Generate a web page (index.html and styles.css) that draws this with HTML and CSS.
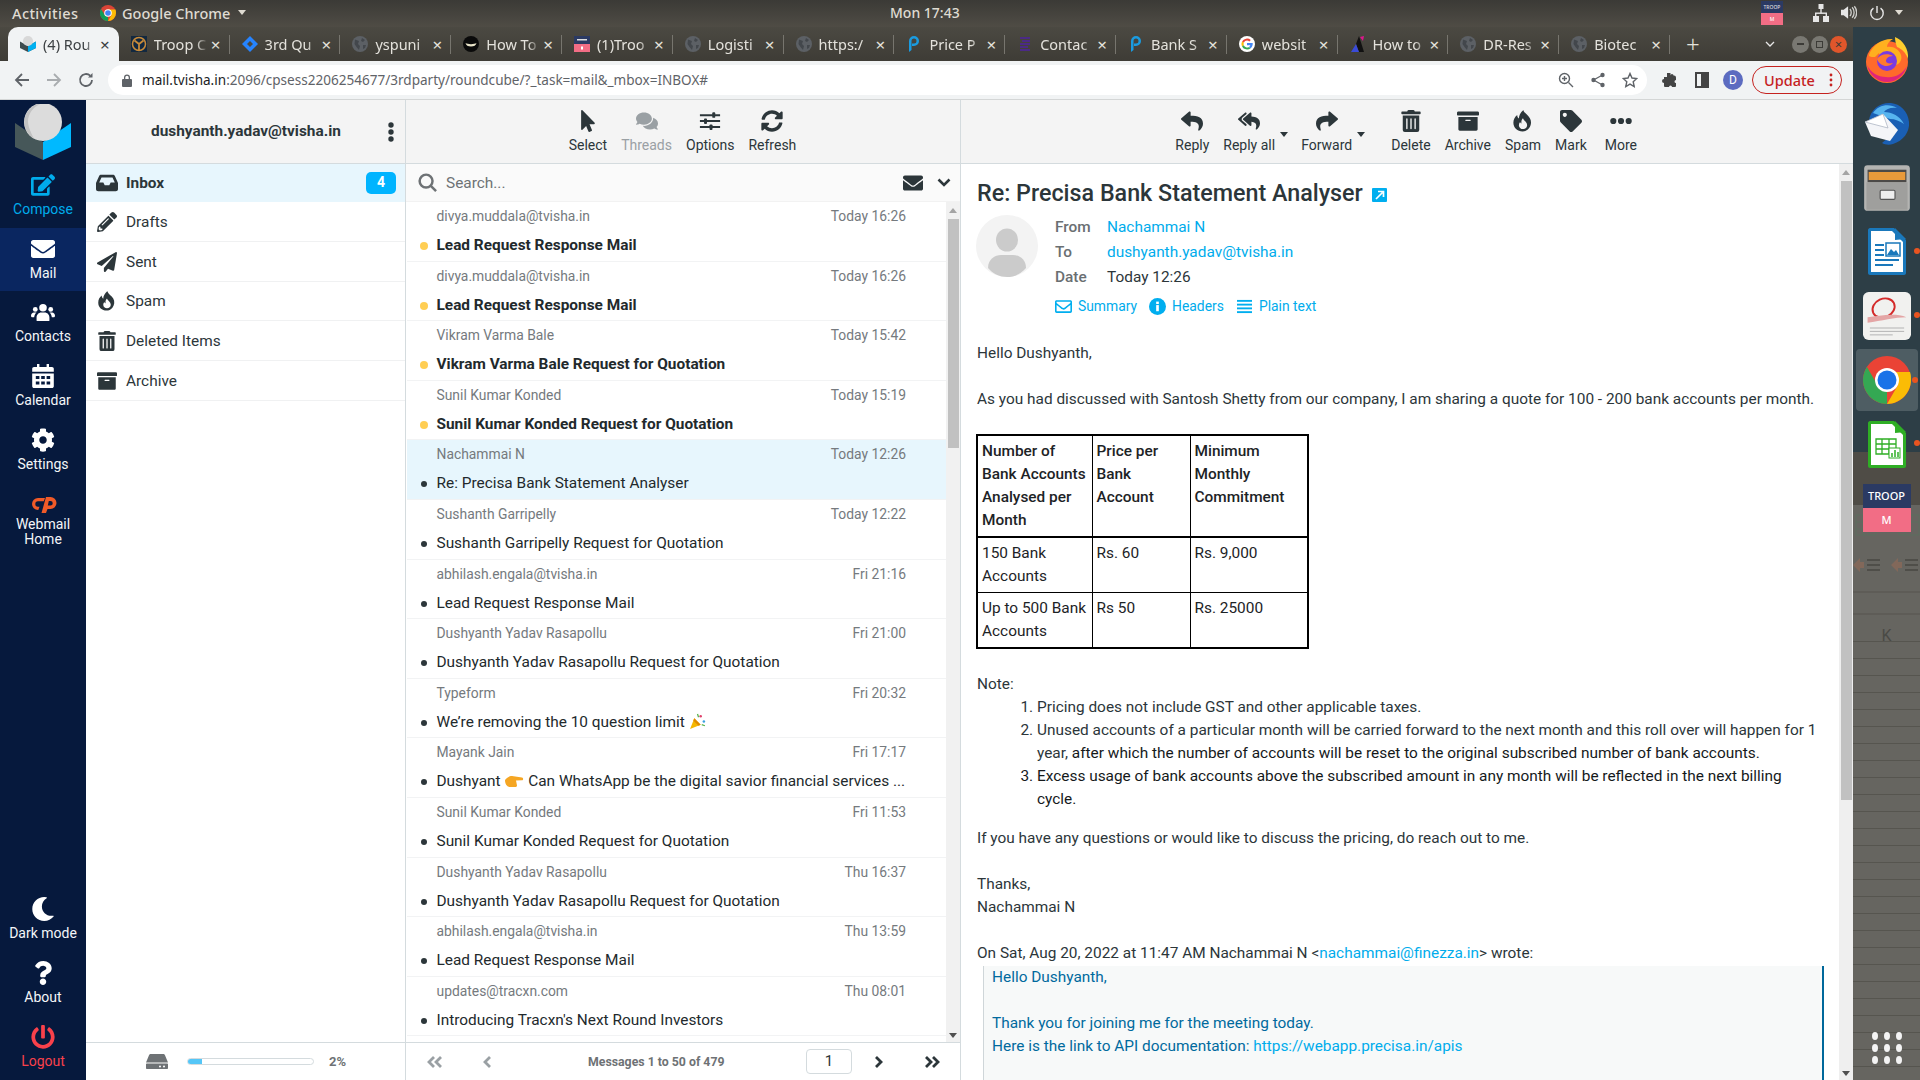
FILE: index.html
```html
<!DOCTYPE html>
<html lang="en">
<head>
<meta charset="utf-8">
<title>Roundcube Webmail</title>
<link rel="stylesheet" href="styles.css">
</head>
<body>
<svg class="defs" aria-hidden="true">
<symbol id="i-reply" viewBox="0 0 512 512"><path d="M8.309 189.836L184.313 37.851C199.719 24.546 224 35.347 224 56.015v80.053c160.629 1.839 288 34.032 288 186.258 0 61.441-39.581 122.309-83.333 154.132-13.653 9.931-33.111-2.533-28.077-18.631 45.344-145.012-21.507-183.51-176.59-185.742V360c0 20.7-24.3 31.453-39.687 18.164l-176.004-152c-11.071-9.562-11.086-26.753 0-36.328z"/></symbol>
<symbol id="i-forward" viewBox="0 0 512 512"><path d="M503.691 189.836L327.687 37.851C312.281 24.546 288 35.347 288 56.015v80.053C127.371 137.907 0 170.1 0 322.326c0 61.441 39.581 122.309 83.333 154.132 13.653 9.931 33.111-2.533 28.077-18.631C66.066 312.814 132.917 274.316 288 272.085V360c0 20.7 24.3 31.453 39.687 18.164l176.004-152c11.071-9.562 11.086-26.753 0-36.328z"/></symbol>
<symbol id="i-replyall" viewBox="0 0 576 512"><path d="M136.309 189.836L312.313 37.851C327.72 24.546 352 35.348 352 56.015v82.763c129.182 10.231 224 52.212 224 183.548 0 61.441-39.582 122.309-83.333 154.132-13.653 9.931-33.111-2.533-28.077-18.631 38.512-123.162-3.922-169.482-112.59-182.015v84.175c0 20.701-24.3 31.453-39.687 18.164L136.309 226.164c-11.071-9.561-11.086-26.753 0-36.328zm-128 36.328L184.313 378.15C199.7 391.439 224 380.687 224 359.986v-15.818l-108.606-93.785A55.96 55.96 0 0 1 96 207.998a55.953 55.953 0 0 1 19.393-42.38L224 71.832V56.015c0-20.667-24.28-31.469-39.687-18.164L8.309 189.836c-11.086 9.575-11.071 26.767 0 36.328z"/></symbol>
<symbol id="i-trash" viewBox="0 0 448 512"><path d="M32 464a48 48 0 0 0 48 48h288a48 48 0 0 0 48-48V128H32zm272-256a16 16 0 0 1 32 0v224a16 16 0 0 1-32 0zm-96 0a16 16 0 0 1 32 0v224a16 16 0 0 1-32 0zm-96 0a16 16 0 0 1 32 0v224a16 16 0 0 1-32 0zM432 32H312l-9.4-18.7A24 24 0 0 0 281.1 0H166.8a23.72 23.72 0 0 0-21.4 13.3L136 32H16A16 16 0 0 0 0 48v32a16 16 0 0 0 16 16h416a16 16 0 0 0 16-16V48a16 16 0 0 0-16-16z"/></symbol>
<symbol id="i-archive" viewBox="0 0 512 512"><path d="M32 448c0 17.7 14.3 32 32 32h384c17.7 0 32-14.3 32-32V160H32v288zm160-212c0-6.6 5.4-12 12-12h104c6.6 0 12 5.4 12 12v8c0 6.6-5.4 12-12 12H204c-6.6 0-12-5.4-12-12v-8zM480 32H32C14.3 32 0 46.3 0 64v48c0 8.8 7.2 16 16 16h480c8.8 0 16-7.2 16-16V64c0-17.7-14.3-32-32-32z"/></symbol>
<symbol id="i-tag" viewBox="0 0 512 512"><path d="M0 252.118V48C0 21.49 21.49 0 48 0h204.118a48 48 0 0 1 33.941 14.059l211.882 211.882c18.745 18.745 18.745 49.137 0 67.882L293.823 497.941c-18.745 18.745-49.137 18.745-67.882 0L14.059 286.059A48 48 0 0 1 0 252.118zM112 64c-26.51 0-48 21.49-48 48s21.49 48 48 48 48-21.49 48-48-21.49-48-48-48z"/></symbol>
<symbol id="i-env" viewBox="0 0 512 512"><path d="M502.3 190.8c3.9-3.1 9.7-.2 9.7 4.7V400c0 26.5-21.5 48-48 48H48c-26.5 0-48-21.5-48-48V195.6c0-5 5.7-7.8 9.7-4.7 22.4 17.4 52.1 39.5 154.1 113.6 21.1 15.4 56.7 47.8 92.2 47.6 35.7.3 72-32.8 92.3-47.6 102-74.1 131.6-96.3 154-113.7zM256 320c23.2.4 56.6-29.2 73.4-41.4 132.7-96.3 142.8-104.7 173.4-128.7 5.8-4.5 9.2-11.5 9.2-18.9v-19c0-26.5-21.5-48-48-48H48C21.5 64 0 85.5 0 112v19c0 7.4 3.4 14.3 9.2 18.9 30.6 23.9 40.7 32.4 173.4 128.7 16.8 12.2 50.2 41.8 73.4 41.4z"/></symbol>
<symbol id="i-envo" viewBox="0 0 512 512"><path d="M464 64H48C21.49 64 0 85.49 0 112v288c0 26.51 21.49 48 48 48h416c26.51 0 48-21.49 48-48V112c0-26.51-21.49-48-48-48zm0 48v40.805c-22.422 18.259-58.168 46.651-134.587 106.49-16.841 13.247-50.201 45.072-73.413 44.701-23.208.375-56.579-31.459-73.413-44.701C106.18 199.465 70.425 171.067 48 152.805V112h416zM48 400V214.398c22.914 18.251 55.409 43.862 104.938 82.646 21.857 17.205 60.134 55.186 103.062 54.955 42.717.231 80.509-37.199 103.053-54.947 49.528-38.783 82.032-64.401 104.947-82.653V400H48z"/></symbol>
<symbol id="i-cursor" viewBox="0 0 320 512"><path d="M302.189 329.126H196.105l55.831 135.993c3.889 9.428-.555 19.999-9.444 23.999l-49.165 21.427c-9.165 4-19.443-.571-23.332-9.714l-53.053-129.136-86.664 89.138C18.729 472.71 0 463.554 0 447.977V18.299C0 1.899 19.921-6.096 30.277 5.443l284.412 292.542c11.472 11.179 3.007 31.141-12.5 31.141z"/></symbol>
<symbol id="i-comments" viewBox="0 0 576 512"><path d="M416 192c0-88.4-93.1-160-208-160S0 103.6 0 192c0 34.3 14.1 65.9 38 92-13.4 30.2-35.5 54.2-35.8 54.5-2.2 2.3-2.8 5.7-1.5 8.7S4.8 352 8 352c36.6 0 66.9-12.3 88.7-25 32.2 15.7 70.3 25 111.3 25 114.9 0 208-71.6 208-160zm122 220c23.9-26 38-57.7 38-92 0-66.9-53.5-124.2-129.3-148.1.9 6.6 1.3 13.3 1.3 20.1 0 105.9-107.7 192-240 192-10.8 0-21.3-.8-31.7-1.9C207.8 439.6 281.8 480 368 480c41 0 79.1-9.2 111.3-25 21.8 12.7 52.1 25 88.7 25 3.2 0 6.1-1.9 7.3-4.8 1.3-2.9.7-6.3-1.5-8.7-.3-.3-22.4-24.2-35.8-54.5z"/></symbol>
<symbol id="i-sliders" viewBox="0 0 24 24"><path d="M1 4.500h22v2.200H1zM1 11h22v2.200H1zM1 17.500h22v2.200H1z"/><rect x="14.500" y="2.500" width="3.200" height="6" rx="1"/><rect x="5.500" y="9.200" width="3.200" height="6" rx="1"/><rect x="11.500" y="15.700" width="3.200" height="6" rx="1"/></symbol>
<symbol id="i-sync" viewBox="0 0 512 512"><path d="M370.72 133.28C339.458 104.008 298.888 87.962 255.848 88c-77.458.068-144.328 53.178-162.791 126.85-1.344 5.363-6.122 9.15-11.651 9.15H24.103c-7.498 0-13.194-6.807-11.807-14.176C33.933 94.924 134.813 8 256 8c66.448 0 126.791 26.136 171.315 68.685L463.03 40.97C478.149 25.851 504 36.559 504 57.941V192c0 13.255-10.745 24-24 24H345.941c-21.382 0-32.09-25.851-16.971-40.971l41.75-41.749zM32 296h134.059c21.382 0 32.09 25.851 16.971 40.971l-41.75 41.75c31.262 29.273 71.835 45.319 114.876 45.28 77.418-.07 144.315-53.144 162.787-126.849 1.344-5.363 6.122-9.15 11.651-9.15h57.304c7.498 0 13.194 6.807 11.807 14.176C478.067 417.076 377.187 504 256 504c-66.448 0-126.791-26.136-171.315-68.685L48.97 471.03C33.851 486.149 8 475.441 8 454.059V320c0-13.255 10.745-24 24-24z"/></symbol>
<symbol id="i-plane" viewBox="0 0 512 512"><path d="M476 3.2L12.5 270.6c-18.1 10.4-15.8 35.6 2.2 43.2L121 358.4l287.3-253.2c5.5-4.9 13.3 2.6 8.6 8.3L176 407v80.5c0 23.6 28.5 32.9 42.5 15.8L282 426l124.6 52.2c14.2 6 30.4-2.9 33-18.2l72-432C515 7.8 493.3-6.8 476 3.2z"/></symbol>
<symbol id="i-pencil" viewBox="0 0 512 512"><path d="M497.9 142.1l-46.1 46.1c-4.7 4.7-12.3 4.7-17 0l-111-111c-4.7-4.7-4.7-12.3 0-17l46.1-46.1c18.7-18.7 49.1-18.7 67.9 0l60.1 60.1c18.8 18.7 18.8 49.1 0 67.9zM284.2 99.8L21.6 362.4.4 483.9c-2.9 16.4 11.4 30.6 27.8 27.8l121.5-21.3 262.6-262.6c4.7-4.7 4.7-12.3 0-17l-111-111c-4.8-4.7-12.4-4.7-17.1 0zM124.1 339.9c-5.5-5.5-5.5-14.3 0-19.8l154-154c5.5-5.5 14.3-5.5 19.8 0s5.5 14.3 0 19.8l-154 154c-5.5 5.5-14.3 5.5-19.8 0zM88 424h48v36.3l-64.5 11.3-31.1-31.1L51.7 376H88v48z"/></symbol>
<symbol id="i-edit" viewBox="0 0 576 512"><path d="M402.6 83.2l90.2 90.2c3.8 3.8 3.8 10 0 13.8L274.4 405.6l-92.8 10.3c-12.4 1.4-22.9-9.1-21.5-21.5l10.3-92.8L388.8 83.2c3.8-3.8 10-3.8 13.8 0zm162-22.9l-48.8-48.8c-15.2-15.2-39.9-15.2-55.2 0l-35.4 35.4c-3.8 3.8-3.8 10 0 13.8l90.2 90.2c3.8 3.8 10 3.8 13.8 0l35.4-35.4c15.2-15.3 15.2-40 0-55.2zM384 346.2V448H64V128h229.8c3.2 0 6.2-1.3 8.5-3.5l40-40c7.6-7.6 2.2-20.5-8.5-20.5H48C21.5 64 0 85.5 0 112v352c0 26.5 21.5 48 48 48h352c26.5 0 48-21.5 48-48V306.2c0-10.7-12.9-16-20.5-8.5l-40 40c-2.2 2.3-3.5 5.3-3.5 8.5z"/></symbol>
<symbol id="i-cog" viewBox="0 0 512 512"><path d="M487.4 315.7l-42.6-24.6c4.3-23.2 4.3-47 0-70.2l42.6-24.6c4.9-2.8 7.1-8.6 5.5-14-11.1-35.6-30-67.8-54.7-94.6-3.8-4.1-10-5.1-14.8-2.3L380.8 110c-17.9-15.4-38.5-27.3-60.8-35.1V25.8c0-5.6-3.9-10.5-9.4-11.7-36.7-8.2-74.3-7.8-109.2 0-5.5 1.2-9.4 6.1-9.4 11.7V75c-22.2 7.9-42.8 19.8-60.8 35.1L88.7 85.5c-4.9-2.8-11-1.9-14.8 2.3-24.7 26.7-43.6 58.9-54.7 94.6-1.7 5.4.6 11.2 5.5 14L67.3 221c-4.3 23.2-4.3 47 0 70.2l-42.6 24.6c-4.9 2.8-7.1 8.6-5.5 14 11.1 35.6 30 67.8 54.7 94.6 3.8 4.1 10 5.1 14.8 2.3l42.6-24.6c17.9 15.4 38.5 27.3 60.8 35.1v49.2c0 5.6 3.9 10.5 9.4 11.7 36.7 8.2 74.3 7.8 109.2 0 5.5-1.2 9.4-6.1 9.4-11.7v-49.2c22.2-7.9 42.8-19.8 60.8-35.1l42.6 24.6c4.9 2.8 11 1.9 14.8-2.3 24.7-26.7 43.6-58.9 54.7-94.6 1.5-5.5-.7-11.3-5.6-14.1zM256 336c-44.1 0-80-35.9-80-80s35.9-80 80-80 80 35.9 80 80-35.9 80-80 80z"/></symbol>
<symbol id="i-moon" viewBox="0 0 512 512"><path d="M283.211 512c78.962 0 151.079-35.925 198.857-94.792 7.068-8.708-.639-21.43-11.562-19.35-124.203 23.654-238.262-71.576-238.262-196.954 0-72.222 38.662-138.635 101.498-174.394 9.686-5.512 7.25-20.197-3.756-22.23A258.156 258.156 0 0 0 283.211 0c-141.309 0-256 114.511-256 256 0 141.309 114.511 256 256 256z"/></symbol>
<symbol id="i-question" viewBox="0 0 384 512"><path d="M202.021 0C122.202 0 70.503 32.703 29.914 91.026c-7.363 10.58-5.093 25.086 5.178 32.874l43.138 32.709c10.373 7.865 25.132 6.026 33.253-4.148 25.049-31.381 43.63-49.449 82.757-49.449 30.764 0 68.816 19.799 68.816 49.631 0 22.552-18.617 34.134-48.993 51.164-35.423 19.86-82.299 44.576-82.299 106.405V320c0 13.255 10.745 24 24 24h72.471c13.255 0 24-10.745 24-24v-5.773c0-42.86 125.268-44.645 125.268-160.627C377.504 66.256 286.902 0 202.021 0zM192 373.459c-38.196 0-69.271 31.075-69.271 69.271 0 38.195 31.075 69.27 69.271 69.27s69.271-31.075 69.271-69.271-31.075-69.27-69.271-69.27z"/></symbol>
<symbol id="i-power" viewBox="0 0 512 512"><path d="M400 54.1c63 45 104 118.6 104 201.9 0 136.8-110.8 247.7-247.5 248C120 504.3 8.2 393 8 256.4 7.9 173.1 48.9 99.3 111.8 54.2c11.7-8.3 28-4.8 35 7.7L162.6 90c5.9 10.5 3.1 23.8-6.6 31-41.5 30.8-68 79.6-68 134.9-.1 92.3 74.5 168.1 168 168.1 91.6 0 168.6-74.2 168-169.1-.3-51.8-24.7-101.8-68.1-134-9.7-7.2-12.4-20.5-6.5-30.9l15.8-28.1c7-12.4 23.2-16.1 34.8-7.8zM296 264V24c0-13.3-10.7-24-24-24h-32c-13.3 0-24 10.7-24 24v240c0 13.3 10.7 24 24 24h32c13.3 0 24-10.7 24-24z"/></symbol>
<symbol id="i-fire" viewBox="0 0 24 24"><path fill-rule="evenodd" d="M12.500 0.500c1 3 5 5 7 8.500 2 3.500 1.500 8-1 11-2 2.500-4.500 3.500-7 3.500-5.500 0-10-4-10-9.500 0-3.500 1.500-6.500 4.200-8.500 0 1.500.5 3 1.800 3.800 0-3 1.500-6.300 5-9.300zM12 9c.5 2.300 4.500 4 4.500 7.500 0 2.500-2 4.300-4.500 4.300s-4.500-1.800-4.500-4.300c0-1.300.5-2.500 1.300-3.400.3.900.8 1.400 1.500 1.700C10 12 10.500 10.500 12 9z"/></symbol>
<symbol id="i-inbox" viewBox="0 0 24 18"><path d="M5.500 0h13c.9 0 1.700.5 2.100 1.300L24 9v6.500c0 1.400-1.100 2.500-2.500 2.500h-19C1.100 18 0 16.900 0 15.500V9l3.400-7.700C3.800.5 4.600 0 5.500 0zM6 3 3.500 8.500H8l1.500 3h5l1.500-3h4.500L18 3z"/></symbol>
<symbol id="i-users" viewBox="0 0 28 20"><circle cx="14" cy="5" r="4.400"/><circle cx="5" cy="7" r="2.800"/><circle cx="23" cy="7" r="2.800"/><path d="M6.500 20v-3.500C6.500 13 9 10.500 12 10.500h4c3 0 5.500 2.500 5.500 6V20c0 .5-.5 .5-1 .5h-13c-.5 0-1 0-1-.5zM0 14.500C0 12 1.500 10.500 3.500 10.500h3c-1.500 1.200-2.500 3-2.800 5.500H1c-.5 0-1-.5-1-1.500zM28 14.500c0-2.500-1.500-4-3.500-4h-3c1.500 1.200 2.500 3 2.800 5.500H27c.5 0 1-.5 1-1.500z"/></symbol>
<symbol id="i-cal" viewBox="0 0 18 20"><path fill-rule="evenodd" d="M4 0h2v2.500h6V0h2v2.500h2.500c.8 0 1.500.7 1.500 1.500v2.500H0V4c0-.8.7-1.500 1.500-1.500H4zM0 8h18v10.500c0 .8-.7 1.500-1.500 1.500h-15C.7 20 0 19.300 0 18.500zM3 10v2.500h3V10zm4.500 0v2.500h3V10zm4.500 0v2.500h3V10zM3 14.500V17h3v-2.500zm4.500 0V17h3v-2.500zm4.500 0V17h3v-2.500z"/></symbol>
<symbol id="i-globe" viewBox="0 0 16 16"><circle cx="8" cy="8" r="8" fill="#5c6065"/><path d="M3 3.500 7 5 6 8 8 10 7 14 4.500 11 2.500 8zM10 2l3 2-2 2-2-1zM11 9l3 0-1 3-2 1z" fill="#43474c"/></symbol>
</svg>

<header class="topbar">
  <span class="tb-activities">Activities</span>
  <svg class="tb-chrome" viewBox="0 0 16 16"><circle cx="8" cy="8" r="8" fill="#db4437"/><path d="M8 16A8 8 0 0 1 1 4l4 6.500 3 1.500z" fill="#0f9d58"/><path d="M16 8a8 8 0 0 1-8 8l3.500-6L8 4.500h7.500c.3 1 .5 2.300.5 3.500z" fill="#fbbc05"/><circle cx="8" cy="8" r="3.800" fill="#fff"/><circle cx="8" cy="8" r="2.800" fill="#4285f4"/></svg>
  <span class="tb-app">Google Chrome</span>
  <span class="tb-caret"></span>
  <span class="tb-clock">Mon 17:43</span>
  <div class="tb-troop"><span class="tb-troop-a">TROOP</span><span class="tb-troop-b">M</span></div>
  <svg class="tb-net" viewBox="0 0 16 18" fill="#e6e6e6"><rect x="5.500" y="0" width="5" height="5"/><rect x="7.300" y="5" width="1.400" height="4"/><rect x="2" y="8.500" width="12" height="1.400"/><rect x="2" y="9" width="1.400" height="3"/><rect x="12.600" y="9" width="1.400" height="3"/><rect x="0" y="12" width="6" height="6"/><rect x="10" y="12" width="6" height="6"/></svg>
  <svg class="tb-vol" viewBox="0 0 18 16" fill="none" stroke="#cfcfcc"><path d="M0 5h3l5-4v14l-5-4H0z" fill="#e6e6e6" stroke="none"/><path d="M10 4c2 2 2 6 0 8M12.500 2c3 3 3 9 0 12M15 1c3.500 4 3.500 10 0 14" stroke-width="1.500"/></svg>
  <svg class="tb-pow" viewBox="0 0 18 18" fill="none" stroke="#e6e6e6" stroke-width="1.600"><path d="M9 1v8M5 3.500a7 7 0 1 0 8 0"/></svg>
  <span class="tb-caret tb-caret-r"></span>
</header>

<div class="desk">
<div class="win">
  <div class="tabstrip">
    <div class="tab tab-on">
      <svg class="fav" viewBox="0 0 16 16"><path d="M0 5.500 8 10l8-4.500V12l-8 4-8-4z" fill="#3d4b4e"/><path d="M8 10l8-4.500V12l-8 4z" fill="#00b0f0"/><circle cx="8" cy="5" r="5" fill="#d8d8d8"/></svg>
      <span class="tab-t">(4) Rou</span><span class="tab-x">×</span>
    </div>
    <div class="tab">
      <svg class="fav" viewBox="0 0 16 16"><rect width="16" height="18" y="-1" fill="#12283f"/><circle cx="8" cy="8" r="6.500" fill="none" stroke="#c78a3a" stroke-width="1.500"/><path d="M3.500 4.500 8 8l4.500-3.500M8 8v6" fill="none" stroke="#c78a3a" stroke-width="1.800"/></svg>
      <span class="tab-t">Troop C</span><span class="tab-x">×</span>
    </div>
    <div class="tab">
      <svg class="fav" viewBox="0 0 16 16"><path d="M8 0 16 8 8 16 0 8z" fill="#2684ff"/><path d="M8 5 11 8 8 11 5 8z" fill="#4a4841"/></svg>
      <span class="tab-t">3rd Qu</span><span class="tab-x">×</span>
    </div>
    <div class="tab"><svg class="fav"><use href="#i-globe"/></svg><span class="tab-t">yspuni</span><span class="tab-x">×</span></div>
    <div class="tab">
      <svg class="fav" viewBox="0 0 16 16"><circle cx="8" cy="8" r="8" fill="#0a0a0a"/><path d="M2.500 7c2 1.500 9 1.500 11 0-.5 2.500-2.500 3.500-5.500 3.500S3 9.500 2.500 7z" fill="#e9e4c9"/></svg>
      <span class="tab-t">How To</span><span class="tab-x">×</span>
    </div>
    <div class="tab">
      <svg class="fav" viewBox="0 0 16 16"><rect y="0" width="16" height="8" fill="#2b3a63"/><rect y="8" width="16" height="8" fill="#f26d85"/><rect x="3" y="3" width="10" height="1.500" fill="#ddd"/><rect x="7" y="10.500" width="2" height="3" fill="#fff"/></svg>
      <span class="tab-t">(1)Troo</span><span class="tab-x">×</span>
    </div>
    <div class="tab"><svg class="fav"><use href="#i-globe"/></svg><span class="tab-t">Logisti</span><span class="tab-x">×</span></div>
    <div class="tab"><svg class="fav"><use href="#i-globe"/></svg><span class="tab-t">https:/</span><span class="tab-x">×</span></div>
    <div class="tab">
      <svg class="fav" viewBox="0 0 16 16"><path d="M3 16V5a5 5 0 1 1 5 5H6V7.500h2a2.500 2.500 0 1 0-2.500-2.500V14z" fill="#1a9be0"/></svg>
      <span class="tab-t">Price P</span><span class="tab-x">×</span>
    </div>
    <div class="tab">
      <svg class="fav" viewBox="0 0 16 16" fill="#4b2a86"><rect x="3" y="1" width="10" height="2"/><rect x="5" y="4" width="8" height="2"/><rect x="3" y="7" width="10" height="2"/><rect x="3" y="10" width="8" height="2"/><rect x="3" y="13" width="10" height="2"/></svg>
      <span class="tab-t">Contac</span><span class="tab-x">×</span>
    </div>
    <div class="tab">
      <svg class="fav" viewBox="0 0 16 16"><path d="M3 16V5a5 5 0 1 1 5 5H6V7.500h2a2.500 2.500 0 1 0-2.500-2.500V14z" fill="#1a9be0"/></svg>
      <span class="tab-t">Bank S</span><span class="tab-x">×</span>
    </div>
    <div class="tab">
      <svg class="fav" viewBox="0 0 16 16"><circle cx="8" cy="8" r="8" fill="#fff"/><path d="M8 4.500a3.500 3.500 0 0 1 2.300.9l1.500-1.500A5.800 5.800 0 0 0 3 5.500l1.800 1.300A3.500 3.500 0 0 1 8 4.500z" fill="#ea4335"/><path d="M3 5.500a5.800 5.800 0 0 0 0 5l1.800-1.300a3.400 3.400 0 0 1 0-2.400z" fill="#fbbc05"/><path d="M3 10.500a5.800 5.800 0 0 0 8.700 1.700l-1.700-1.300a3.500 3.500 0 0 1-5.200-1.700z" fill="#34a853"/><path d="M13.700 7H8v2.200h3.300a2.900 2.900 0 0 1-1.300 1.700l1.700 1.300c1.300-1.200 2.300-3 2-5.200z" fill="#4285f4"/></svg>
      <span class="tab-t">websit</span><span class="tab-x">×</span>
    </div>
    <div class="tab">
      <svg class="fav" viewBox="0 0 16 16"><path d="M9 0 14 16H9L6 8z" fill="#111"/><path d="M6 8 9 16H1z" fill="#3a4bd8"/><path d="M10 1 14 0 13 5z" fill="#e0158e"/></svg>
      <span class="tab-t">How to</span><span class="tab-x">×</span>
    </div>
    <div class="tab"><svg class="fav"><use href="#i-globe"/></svg><span class="tab-t">DR-Res</span><span class="tab-x">×</span></div>
    <div class="tab"><svg class="fav"><use href="#i-globe"/></svg><span class="tab-t">Biotec</span><span class="tab-x">×</span></div>
    <span class="tab-plus">+</span>
    <svg class="tab-chev" viewBox="0 0 10 6" fill="none" stroke="#e8e8e8" stroke-width="1.300"><path d="M1 1l4 4 4-4"/></svg>
    <div class="winbtns">
      <span class="wb"><span class="wb-min"></span></span>
      <span class="wb"><span class="wb-max"></span></span>
      <span class="wb wb-close">×</span>
    </div>
  </div>

  <div class="omni">
    <svg class="om-ic om-back" viewBox="0 0 16 16" fill="none" stroke="#5f6368" stroke-width="1.800"><path d="M15 8H2M8 2 2 8l6 6"/></svg>
    <svg class="om-ic om-fwd" viewBox="0 0 16 16" fill="none" stroke="#a9acaf" stroke-width="1.800"><path d="M1 8h13M8 2l6 6-6 6"/></svg>
    <svg class="om-ic om-rel" viewBox="0 0 16 16" fill="none" stroke="#5f6368" stroke-width="1.800"><path d="M14 8a6 6 0 1 1-1.800-4.300"/><path d="M14.500 1v4.500H10" fill="#5f6368" stroke="none"/></svg>
    <div class="om-bar">
      <svg class="om-lock" viewBox="0 0 10 13" fill="#5f6368"><path d="M2 5V3.500a3 3 0 0 1 6 0V5h1a1 1 0 0 1 1 1v6a1 1 0 0 1-1 1H1a1 1 0 0 1-1-1V6a1 1 0 0 1 1-1zm1.300 0h3.400V3.500a1.700 1.700 0 0 0-3.400 0z"/></svg>
      <span class="om-url"><span class="om-host">mail.tvisha.in</span>:2096/cpsess2206254677/3rdparty/roundcube/?_task=mail&amp;_mbox=INBOX#</span>
      <svg class="om-r" viewBox="0 0 16 16" fill="none" stroke="#5f6368" stroke-width="1.400"><circle cx="6.500" cy="6.500" r="5"/><path d="M10.500 10.500l4.500 4.500M6.500 4v5M4 6.500h5"/></svg>
      <svg class="om-r" viewBox="0 0 16 16" fill="#5f6368"><circle cx="12.500" cy="3" r="2.200"/><circle cx="3.500" cy="8" r="2.200"/><circle cx="12.500" cy="13" r="2.200"/><path d="M3.500 8l9-5M3.500 8l9 5" stroke="#5f6368" stroke-width="1.300"/></svg>
      <svg class="om-r" viewBox="0 0 16 16" fill="none" stroke="#5f6368" stroke-width="1.400"><path d="M8 1.500l2 4.500 4.800.5-3.600 3.200 1 4.800L8 12.100l-4.200 2.400 1-4.800L1.200 6.500 6 6z"/></svg>
    </div>
    <svg class="om-ext" viewBox="0 0 16 16" fill="#444"><path d="M6 1h3.500v2.500a1.500 1.500 0 0 1 3 0h.5a2 2 0 0 1 2 2V8a1.500 1.500 0 0 0 0 3v3a1 1 0 0 1-1 1H11a1.500 1.500 0 0 0-3 0H4a1 1 0 0 1-1-1v-3a2 2 0 0 1 0-4V5H6z"/></svg>
    <svg class="om-side" viewBox="0 0 14 16" fill="none" stroke="#444" stroke-width="2"><rect x="1" y="1" width="12" height="14"/><rect x="7" y="1" width="6" height="14" fill="#444"/></svg>
    <span class="om-av">D</span>
    <div class="om-up"><span>Update</span><svg class="om-dots" viewBox="0 0 4 14" fill="#c5221f"><circle cx="2" cy="2" r="1.400"/><circle cx="2" cy="7" r="1.400"/><circle cx="2" cy="12" r="1.400"/></svg></div>
  </div>

  <div class="app">
    <nav class="nav">
      <div class="nav-logo">
        <svg viewBox="0 0 56 57" class="logo"><path d="M0 19 28 38V56L0 43z" fill="#465759"/><path d="M56 19 28 38V56L56 43z" fill="#00b9ff"/><circle cx="28" cy="18" r="19" fill="#dcdcdc"/><path d="M28-1a19 19 0 0 0-9 35.500c-4-7-6-13-6-17 0-8 6-16 15-18.500z" fill="#c2c2c2"/></svg>
      </div>
      <div class="nav-i nav-blue"><svg class="nav-g"><use href="#i-edit"/></svg><span>Compose</span></div>
      <div class="nav-i nav-on"><svg class="nav-g"><use href="#i-env"/></svg><span>Mail</span></div>
      <div class="nav-i"><svg class="nav-g"><use href="#i-users"/></svg><span>Contacts</span></div>
      <div class="nav-i"><svg class="nav-g"><use href="#i-cal"/></svg><span>Calendar</span></div>
      <div class="nav-i"><svg class="nav-g"><use href="#i-cog"/></svg><span>Settings</span></div>
      <div class="nav-i nav-two">
        <svg class="nav-g nav-cp" viewBox="0 0 27 18"><path d="M8 3h7l-1.200 3.300H8a2.700 2.700 0 0 0 0 5.400h1.500L8.300 15H8A6 6 0 0 1 8 3z"/><path fill-rule="evenodd" d="M16 2h4.500a6 6 0 0 1 0 12h-3L16 18h-4.500zM18.800 6l-1 4.500h2.700a2.200 2.200 0 0 0 0-4.500z"/></svg>
        <span>Webmail<br>Home</span>
      </div>
      <div class="nav-grow"></div>
      <div class="nav-i"><svg class="nav-g"><use href="#i-moon"/></svg><span>Dark mode</span></div>
      <div class="nav-i"><svg class="nav-g"><use href="#i-question"/></svg><span>About</span></div>
      <div class="nav-i nav-red"><svg class="nav-g"><use href="#i-power"/></svg><span>Logout</span></div>
    </nav>

    <section class="folders">
      <div class="pane-head fold-head">
        <span class="fold-user">dushyanth.yadav@tvisha.in</span>
        <svg class="fold-dots" viewBox="0 0 6 20" fill="#2c363a"><circle cx="3" cy="3" r="2.700"/><circle cx="3" cy="10" r="2.700"/><circle cx="3" cy="17" r="2.700"/></svg>
      </div>
      <ul class="fold-list">
        <li class="fold fold-on"><svg class="fold-g"><use href="#i-inbox"/></svg><span class="fold-n">Inbox</span><span class="badge">4</span></li>
        <li class="fold"><svg class="fold-g"><use href="#i-pencil"/></svg><span class="fold-n">Drafts</span></li>
        <li class="fold"><svg class="fold-g"><use href="#i-plane"/></svg><span class="fold-n">Sent</span></li>
        <li class="fold"><svg class="fold-g"><use href="#i-fire"/></svg><span class="fold-n">Spam</span></li>
        <li class="fold"><svg class="fold-g"><use href="#i-trash"/></svg><span class="fold-n">Deleted Items</span></li>
        <li class="fold"><svg class="fold-g"><use href="#i-archive"/></svg><span class="fold-n">Archive</span></li>
      </ul>
      <div class="quota">
        <svg class="quota-g" viewBox="0 0 22 15" fill="#6e7275"><path d="M5 0h12c1 0 1.700.5 2 1.300L22 8.500H0l3-7.200C3.300.5 4 0 5 0z"/><path fill-rule="evenodd" d="M1 9.500h20c.6 0 1 .4 1 1V14c0 .6-.4 1-1 1H1c-.6 0-1-.4-1-1v-3.500c0-.6.4-1 1-1zm13 2a1 1 0 1 0 0 2 1 1 0 0 0 0-2zm4 0a1 1 0 1 0 0 2 1 1 0 0 0 0-2z"/></svg>
        <div class="quota-bar"><div class="quota-fill"></div></div>
        <span class="quota-p">2%</span>
      </div>
    </section>

    <section class="list">
      <div class="pane-head list-head">
        <div class="tbtn"><svg class="tbtn-g"><use href="#i-cursor"/></svg><span>Select</span></div>
        <div class="tbtn tbtn-off"><svg class="tbtn-g"><use href="#i-comments"/></svg><span>Threads</span></div>
        <div class="tbtn"><svg class="tbtn-g"><use href="#i-sliders"/></svg><span>Options</span></div>
        <div class="tbtn"><svg class="tbtn-g"><use href="#i-sync"/></svg><span>Refresh</span></div>
      </div>
      <div class="search">
        <svg class="search-g" viewBox="0 0 20 20" fill="none" stroke="#6e7275" stroke-width="2.600"><circle cx="8.500" cy="8.500" r="6.800"/><path d="M13.500 13.500l5.500 5.500"/></svg>
        <span class="search-t">Search...</span>
        <svg class="search-e"><use href="#i-env"/></svg>
        <svg class="search-c" viewBox="0 0 14 9" fill="none" stroke="#2c363a" stroke-width="2.600"><path d="M1.500 1.500 7 7l5.500-5.500"/></svg>
      </div>
      <div class="list-body">
        <div class="msgs">
          <div class="msg"><div class="m-top"><span>divya.muddala@tvisha.in</span><span>Today 16:26</span></div><div class="m-sub m-new">Lead Request Response Mail</div></div>
          <div class="msg"><div class="m-top"><span>divya.muddala@tvisha.in</span><span>Today 16:26</span></div><div class="m-sub m-new">Lead Request Response Mail</div></div>
          <div class="msg"><div class="m-top"><span>Vikram Varma Bale</span><span>Today 15:42</span></div><div class="m-sub m-new">Vikram Varma Bale Request for Quotation</div></div>
          <div class="msg"><div class="m-top"><span>Sunil Kumar Konded</span><span>Today 15:19</span></div><div class="m-sub m-new">Sunil Kumar Konded Request for Quotation</div></div>
          <div class="msg msg-sel"><div class="m-top"><span>Nachammai N</span><span>Today 12:26</span></div><div class="m-sub">Re: Precisa Bank Statement Analyser</div></div>
          <div class="msg"><div class="m-top"><span>Sushanth Garripelly</span><span>Today 12:22</span></div><div class="m-sub">Sushanth Garripelly Request for Quotation</div></div>
          <div class="msg"><div class="m-top"><span>abhilash.engala@tvisha.in</span><span>Fri 21:16</span></div><div class="m-sub">Lead Request Response Mail</div></div>
          <div class="msg"><div class="m-top"><span>Dushyanth Yadav Rasapollu</span><span>Fri 21:00</span></div><div class="m-sub">Dushyanth Yadav Rasapollu Request for Quotation</div></div>
          <div class="msg"><div class="m-top"><span>Typeform</span><span>Fri 20:32</span></div><div class="m-sub">We’re removing the 10 question limit <svg class="emo" viewBox="0 0 16 16"><path d="M1 15 5 5l6 6z" fill="#f5b700"/><path d="M5 5l6 6-2 1-5-5z" fill="#e08a00"/><circle cx="11" cy="3" r="1.200" fill="#e0406a"/><circle cx="14" cy="8" r="1.200" fill="#3aa0e0"/><path d="M8 1l1 3M12 11l3 1" stroke="#59b44a" stroke-width="1.200"/></svg></div></div>
          <div class="msg"><div class="m-top"><span>Mayank Jain</span><span>Fri 17:17</span></div><div class="m-sub">Dushyant <svg class="emo emo-w" viewBox="0 0 20 14"><path d="M1 6c2-2 4-4 7-4l10 1.500c1.500.3 1.500 2.500 0 2.800L12 6.500l1 5c0 1-1 1.500-2 1.500H6C3 13 1 10 1 6z" fill="#f5a623"/></svg> Can WhatsApp be the digital savior financial services ...</div></div>
          <div class="msg"><div class="m-top"><span>Sunil Kumar Konded</span><span>Fri 11:53</span></div><div class="m-sub">Sunil Kumar Konded Request for Quotation</div></div>
          <div class="msg"><div class="m-top"><span>Dushyanth Yadav Rasapollu</span><span>Thu 16:37</span></div><div class="m-sub">Dushyanth Yadav Rasapollu Request for Quotation</div></div>
          <div class="msg"><div class="m-top"><span>abhilash.engala@tvisha.in</span><span>Thu 13:59</span></div><div class="m-sub">Lead Request Response Mail</div></div>
          <div class="msg"><div class="m-top"><span>updates@tracxn.com</span><span>Thu 08:01</span></div><div class="m-sub">Introducing Tracxn's Next Round Investors</div></div>
        </div>
        <div class="sb sb-list"><span class="sb-up"></span><span class="sb-thumb"></span><span class="sb-down"></span></div>
      </div>
      <div class="pager">
        <svg class="pg pg-off pg-dbl" viewBox="0 0 16 12"><path d="M7 1 2 6l5 5M14 1 9 6l5 5"/></svg>
        <svg class="pg pg-off pg-one" viewBox="0 0 8 12"><path d="M7 1 2 6l5 5"/></svg>
        <span class="pg-t">Messages 1 to 50 of 479</span>
        <span class="pg-in">1</span>
        <svg class="pg pg-one2" viewBox="0 0 8 12"><path d="M1 1l5 5-5 5"/></svg>
        <svg class="pg pg-dbl2" viewBox="0 0 16 12"><path d="M2 1l5 5-5 5M9 1l5 5-5 5"/></svg>
      </div>
    </section>

    <section class="read">
      <div class="pane-head read-head">
        <div class="tbtn"><svg class="tbtn-g"><use href="#i-reply"/></svg><span>Reply</span></div>
        <div class="tbtn tbtn-drop"><svg class="tbtn-g"><use href="#i-replyall"/></svg><span>Reply all</span></div>
        <div class="tbtn tbtn-drop tbtn-wide"><svg class="tbtn-g"><use href="#i-forward"/></svg><span>Forward</span></div>
        <div class="tbtn"><svg class="tbtn-g"><use href="#i-trash"/></svg><span>Delete</span></div>
        <div class="tbtn"><svg class="tbtn-g"><use href="#i-archive"/></svg><span>Archive</span></div>
        <div class="tbtn"><svg class="tbtn-g"><use href="#i-fire"/></svg><span>Spam</span></div>
        <div class="tbtn tbtn-mark"><svg class="tbtn-g"><use href="#i-tag"/></svg><span>Mark</span></div>
        <div class="tbtn"><svg class="tbtn-g" viewBox="0 0 20 20"><circle cx="3" cy="10" r="2.800"/><circle cx="10" cy="10" r="2.800"/><circle cx="17" cy="10" r="2.800"/></svg><span>More</span></div>
      </div>
      <div class="read-body">
        <div class="mail">
          <h1 class="mail-title">Re: Precisa Bank Statement Analyser <svg class="mail-ext" viewBox="0 0 15 14"><rect width="15" height="14" rx="1" fill="#00aeef"/><path d="M4 11l6.500-6.500M6 3.500h5.500V9" stroke="#fff" stroke-width="1.700" fill="none"/></svg></h1>
          <div class="mail-hd">
            <svg class="avatar" viewBox="0 0 62 62"><ellipse cx="31" cy="31" rx="31" ry="31" fill="#f3f3f3"/><ellipse cx="31" cy="25" rx="11" ry="11.500" fill="#cbcbcb"/><path d="M12 53c0-9 7-13 13-13h12c6 0 13 4 13 13c-5 6-12 9-19 9s-14-3-19-9z" fill="#cbcbcb"/></svg>
            <div class="hd-txt">
              <div class="hd-row"><b>From</b><a>Nachammai N</a></div>
              <div class="hd-row"><b>To</b><a>dushyanth.yadav@tvisha.in</a></div>
              <div class="hd-row"><b>Date</b><span>Today 12:26</span></div>
              <div class="hd-links">
                <svg class="hl-g" fill="#00aeef"><use href="#i-envo"/></svg><a>Summary</a>
                <svg class="hl-g hl-i" viewBox="0 0 18 18"><circle cx="9" cy="9" r="9" fill="#00aeef"/><rect x="7.600" y="7.500" width="2.800" height="6.500" fill="#fff"/><rect x="7.600" y="3.800" width="2.800" height="2.600" fill="#fff"/></svg><a>Headers</a>
                <svg class="hl-g hl-l" viewBox="0 0 16 16" fill="#00aeef"><rect y="1" width="16" height="2"/><rect y="5" width="16" height="2"/><rect y="9" width="16" height="2"/><rect y="13" width="16" height="2"/></svg><a>Plain text</a>
              </div>
            </div>
          </div>
          <div class="body">
            <p>Hello Dushyanth,</p>
            <p class="gap">As you had discussed with Santosh Shetty from our company, I am sharing a quote for 100 - 200 bank accounts per month.</p>
            <table class="quote">
              <tr class="q-head"><th class="q1">Number of Bank Accounts Analysed per Month</th><th class="q2">Price per Bank Account</th><th class="q3">Minimum Monthly Commitment</th></tr>
              <tr><td>150 Bank Accounts</td><td>Rs. 60</td><td>Rs. 9,000</td></tr>
              <tr><td>Up to 500 Bank Accounts</td><td>Rs 50</td><td>Rs. 25000</td></tr>
            </table>
            <p class="gap-note">Note:</p>
            <ol class="notes">
              <li>Pricing does not include GST and other applicable taxes.</li>
              <li>Unused accounts of a particular month will be carried forward to the next month and this roll over will happen for 1 year, <span class="blk">after which the number of accounts will be reset to the original subscribed number of bank accounts.</span></li>
              <li class="blk">Excess usage of bank accounts above the subscribed amount in any month will be reflected in the next billing cycle.</li>
            </ol>
            <p class="gap-s">If you have any questions or would like to discuss the pricing, do reach out to me.</p>
            <p class="gap">Thanks,<br>Nachammai N</p>
            <p class="gap">On Sat, Aug 20, 2022 at 11:47 AM Nachammai N &lt;<a>nachammai@finezza.in</a>&gt; wrote:</p>
            <blockquote class="bq">
              <p>Hello Dushyanth,</p>
              <p class="gap">Thank you for joining me for the meeting today.<br>Here is the link to API documentation: <a>https://webapp.precisa.in/apis</a></p>
            </blockquote>
          </div>
        </div>
        <div class="sb sb-read"><span class="sb-up"></span><span class="sb-thumb"></span><span class="sb-down"></span></div>
      </div>
    </section>
  </div>
</div>

<aside class="dock">
  <div class="dock-top">
    <div class="dk">
      <svg viewBox="0 0 48 48"><circle cx="24" cy="27" r="21" fill="#ff6a2b"/><path d="M6 20C9 10 20 3 30 4c-4 2-6 5-6 8 6-1 12 2 14 8 1 3 0 7-3 9-4 3-11 3-15 0 3 0 6-2 6-5-5 0-9-2-10-6l-4 4C9 22 6 22 6 20z" fill="#ffb01f"/><path d="M32 2c8 3 14 12 13 22-2-6-6-10-11-12-1-3-2-6-2-10z" fill="#ffce2e"/><circle cx="24" cy="26" r="10" fill="#7a3be0"/><path d="M14 24c3-5 11-6 16-3-5 0-7 3-7 5s3 3 7 2c-4 5-13 4-16-4z" fill="#ff7a2e"/><path d="M4 30c2 10 11 17 20 17s17-6 20-16c-5 9-13 12-21 11-8 0-15-4-19-12z" fill="#e0247a"/></svg>
    </div>
    <div class="dk">
      <svg viewBox="0 0 48 48"><path d="M6 22C7 10 18 3 28 4c9 1 17 8 18 19 1 10-6 19-16 22-3 1-8 1-11-1l15-13z" fill="#1a5fb4"/><path d="M10 14c5-8 16-10 24-5-6-1-11 1-13 4 8 0 16 4 20 12-4-3-9-5-14-5z" fill="#57b4ef"/><path d="M2 23 20 15l15 16-8 11-19-5z" fill="#f4f5f8"/><path d="M2 23l18-8 5 14z" fill="#fff" stroke="#aeb6c4" stroke-width=".8"/></svg>
    </div>
    <div class="dk">
      <svg viewBox="0 0 42 42"><rect x="1" y="1" width="40" height="40" rx="3" fill="#b4b4b2"/><rect x="4" y="5" width="34" height="11" fill="#4c4a48"/><rect x="5" y="7" width="32" height="7" fill="#e99a3a"/><rect x="3" y="16" width="36" height="24" fill="#9f9f9d"/><rect x="15" y="23" width="13" height="8" rx="1" fill="#eee" stroke="#555"/></svg>
    </div>
    <div class="dk dk-dot">
      <svg viewBox="0 0 40 48"><path d="M1 2c0-1 1-2 2-2h24l12 12v33c0 1-1 2-2 2H3c-1 0-2-1-2-2z" fill="#1a78bb"/><path d="M4 3h21l11 11v30H4z" fill="#fff"/><path d="M28 0l11 11-11 1z" fill="#1a78bb"/><rect x="8" y="16" width="9" height="2" fill="#1a78bb"/><rect x="8" y="21" width="9" height="2" fill="#1a78bb"/><rect x="8" y="26" width="9" height="2" fill="#1a78bb"/><rect x="8" y="31" width="24" height="2" fill="#1a78bb"/><rect x="8" y="36" width="18" height="2" fill="#1a78bb"/><rect x="19" y="15" width="14" height="13" fill="none" stroke="#1a78bb" stroke-width="1.500"/><path d="M20 27l4-6 3 3 2-2 3 5z" fill="#1a78bb"/></svg>
    </div>
    <div class="dk dk-dot">
      <svg viewBox="0 0 42 42"><rect x="0" y="0" width="42" height="42" rx="5" fill="#f1f1ef"/><ellipse cx="18" cy="14" rx="10" ry="8" transform="rotate(-25 18 14)" fill="none" stroke="#d42a2a" stroke-width="1.700"/><path d="M4 22c10-1 24-4 34 0-10 0-22 3-34 5z" fill="#e4a5a5"/><rect x="6" y="31" width="30" height="1" fill="#bbb"/><rect x="6" y="34" width="30" height="1" fill="#bbb"/><rect x="6" y="37" width="20" height="1" fill="#bbb"/></svg>
    </div>
    <div class="dk dk-on dk-dot">
      <svg viewBox="0 0 48 48"><circle cx="24" cy="24" r="24" fill="#ea4335"/><path d="M24 48C11 48 0 37 0 24c0-5 1.500-9 4-13l11 19 9 6z" fill="#34a853"/><path d="M48 24c0 13-11 24-24 24l11-19-2-13h14c1 2.500 1 5.500 1 8z" fill="#fbbc05"/><circle cx="24" cy="24" r="12" fill="#fff"/><circle cx="24" cy="24" r="9.500" fill="#1a73e8"/></svg>
    </div>
    <div class="dk dk-dot">
      <svg viewBox="0 0 40 48"><path d="M1 2c0-1 1-2 2-2h24l12 12v33c0 1-1 2-2 2H3c-1 0-2-1-2-2z" fill="#2fae25"/><path d="M4 3h21l11 11v30H4z" fill="#fff"/><path d="M28 0l11 11-11 1z" fill="#2fae25"/><path d="M9 18h20v15H9zM9 23h20M9 28h20M15 18v15M22 18v15" fill="none" stroke="#2fae25" stroke-width="1.300"/><rect x="22" y="27" width="11" height="10" fill="#fff" stroke="#2fae25"/><path d="M25 36v-4M28 36v-7M31 36v-5" stroke="#2fae25" stroke-width="1.500"/></svg>
    </div>
  </div>
  <div class="dock-mid">
    <div class="dk-troop"><span class="dk-troop-a">TROOP</span><span class="dk-troop-b">M</span></div>
  </div>
  <div class="dock-faint">
    <svg class="dk-bg" viewBox="0 0 67 115">
      <g fill="none" stroke="#5c6e5f"><path d="M3 10h20v20H3zM3 17h20M3 24h20M10 10v20M16 10v20"/><path d="M46 10h20v20H46zM46 17h20M52 10v20"/></g>
      <path d="M0 60l7-7v4h4v6H7v4zM38 60l7-7v4h4v6h-4v4z" fill="#82685a"/>
      <g fill="#4f4e49"><rect x="14" y="54" width="13" height="2"/><rect x="14" y="59" width="13" height="2"/><rect x="14" y="64" width="13" height="2"/><rect x="52" y="54" width="13" height="2"/><rect x="52" y="59" width="13" height="2"/><rect x="52" y="64" width="13" height="2"/></g>
      <path d="M0 87h67M0 109h67" stroke="#56554f"/>
    </svg>
    <span class="dk-k">K</span>
  </div>
  <div class="dock-low">
    <div class="dk-apps"><i></i><i></i><i></i><i></i><i></i><i></i><i></i><i></i><i></i></div>
  </div>
</aside>
</div>
</body>
</html>
```

FILE: styles.css
```css
* { box-sizing: border-box; }
html, body { margin: 0; height: 100%; }
body {
  width: 1920px; height: 1080px; overflow: hidden;
  display: flex; flex-direction: column;
  font-family: Roboto, "Noto Sans", sans-serif; font-size: 15px; color: #2c363a;
}
.defs { display: none; }
p { margin: 0; }
ul, ol { margin: 0; padding: 0; list-style: none; }
svg { display: block; flex: none; }

/* ---------- desktop top bar ---------- */
.topbar {
  height: 27px; flex: none; display: flex; align-items: center;
  background: linear-gradient(#3b3a36, #4f4c45);
  color: #dfdbd2; font-family: "Noto Sans", sans-serif; font-size: 14.500px; font-weight: 500;
  padding: 0 0 2px 12px;
}
.tb-activities { width: 88px; white-space: nowrap; letter-spacing: .4px; }
.tb-chrome { width: 16px; height: 16px; }
.tb-app { margin-left: 6px; width: 116px; white-space: nowrap; }
.tb-caret { width: 0; height: 0; border: 4.500px solid transparent; border-top: 5px solid #dfdbd2; border-bottom: 0; margin-left: 0; }
.tb-clock { margin-left: 644px; width: 76px; white-space: nowrap; font-size: 14px; }
.tb-troop { margin-left: 795px; width: 22px; height: 24px; display: flex; flex-direction: column; font-size: 5px; text-align: center; line-height: 12px; }
.tb-troop-a { background: #2b3a63; height: 12px; color: #ddd; }
.tb-troop-b { background: #f26d85; height: 12px; color: #fff; }
.tb-net { width: 16px; height: 18px; margin-left: 30px; }
.tb-vol { width: 16px; height: 15px; margin-left: 12px; }
.tb-pow { width: 16px; height: 18px; margin-left: 12px; }
.tb-caret-r { margin-left: 10px; }

.desk { flex: 1; display: flex; min-height: 0; }
.win { width: 1853px; flex: none; display: flex; flex-direction: column; min-width: 0; }

/* ---------- chrome tabs ---------- */
.tabstrip {
  height: 34px; flex: none; display: flex; align-items: center;
  background: linear-gradient(#4b4942, #3e3c36); padding-left: 8px; color: #e4e2dc;
  font-family: "Noto Sans", sans-serif; font-size: 14.500px;
}
.tab {
  width: 110.800px; height: 34px; flex: none; display: flex; align-items: center; padding: 0 10px 0 12px;
  position: relative;
}
.tab::after { content: ""; position: absolute; right: 0; top: 8px; height: 19px; width: 1px; background: #77756e; }
.tab-on { background: #f1f3f4; color: #3c4043; border-radius: 10px 10px 0 0; }
.tab-on::after { display: none; }
.fav { width: 16px; height: 16px; }
.tab-t {
  width: 54px; margin-left: 7px; overflow: hidden; white-space: nowrap; flex: none;
  -webkit-mask-image: linear-gradient(to right, #000 78%, transparent);
  mask-image: linear-gradient(to right, #000 78%, transparent);
}
.tab-x { margin-left: 3px; font-size: 17px; line-height: 1; }
.tab-plus { margin-left: 16px; font-size: 24px; font-weight: 300; line-height: 1; width: 20px; }
.tab-chev { width: 10px; height: 6px; margin-left: 59px; }
.winbtns { display: flex; gap: 2px; margin-left: 17px; }
.wb { width: 17px; height: 17px; border-radius: 50%; background: #797872; display: flex; align-items: center; justify-content: center; color: #3c3b37; font-size: 13px; line-height: 1; }
.wb-min { width: 7px; height: 1.500px; background: #3c3b37; }
.wb-max { width: 7px; height: 7px; border: 1.500px solid #3c3b37; }
.wb-close { background: #e0562b; }

/* ---------- chrome toolbar ---------- */
.omni {
  height: 39px; flex: none; display: flex; align-items: center; background: #f1f3f4;
  border-bottom: 1px solid #d4d6d6; padding-left: 14px;
}
.om-ic { width: 16px; height: 16px; }
.om-fwd { margin-left: 16px; }
.om-rel { margin-left: 16px; }
.om-bar {
  margin-left: 14px; width: 1539px; height: 30px; border-radius: 15px; background: #fff;
  display: flex; align-items: center; padding-left: 14px;
}
.om-lock { width: 10px; height: 13px; }
.om-url { margin-left: 10px; width: 1416px; white-space: nowrap; color: #5f6368; font-family: "Noto Sans", sans-serif; font-size: 13.550px; }
.om-host { color: #202124; }
.om-r { width: 16px; height: 16px; margin-right: 16px; }
.om-r:last-child { margin-right: 0; }
.om-ext { width: 16px; height: 16px; margin-left: 14px; }
.om-side { width: 14px; height: 16px; margin-left: 18px; }
.om-av { width: 20px; height: 20px; margin-left: 14px; border-radius: 50%; background: #5c6bc0; color: #fff; text-align: center; font-size: 12px; line-height: 20px; }
.om-up {
  margin-left: 9px; width: 90px; height: 28px; border: 1px solid #c5221f; border-radius: 14px; color: #c5221f;
  display: flex; align-items: center; padding-left: 11px; font-family: "Noto Sans", sans-serif; font-size: 14.500px; font-weight: 500;
}
.om-dots { width: 4px; height: 14px; margin-left: 14px; }

/* ---------- roundcube app ---------- */
.app { flex: 1; display: flex; min-height: 0; background: #fff; }
.nav { width: 86px; flex: none; background: #06193d; color: #fff; display: flex; flex-direction: column; }
.nav-logo { height: 64px; display: flex; padding: 4px 15px 0; }
.logo { width: 56px; height: 57px; }
.nav-i { height: 64px; flex: none; padding-top: 9px; display: flex; flex-direction: column; align-items: center; text-align: center; font-size: 14px; line-height: 18px; color: #f4f6f8; }
.nav-g { width: 24px; height: 24px; margin-bottom: 3px; color: #fff; fill: currentColor; }
.nav-blue, .nav-blue .nav-g { color: #00acec; }
.nav-on { background: #0a2660; height: 63px; }
.nav-red, .nav-red .nav-g { color: #f9414b; }
.nav-two { line-height: 15px; height: 72px; }
.nav-two .nav-g { margin-bottom: 1px; }
.nav-two .nav-cp { fill: #f05a28; width: 27px; }
.nav-grow { flex: 1; }

.folders { width: 320px; flex: none; display: flex; flex-direction: column; border-right: 1px solid #d4dbde; }
.pane-head { height: 64px; flex: none; background: #f4f4f4; border-bottom: 1px solid #d4dbde; display: flex; align-items: center; }
.fold-head { padding-left: 65px; }
.fold-user { width: 237px; font-size: 15.400px; font-weight: 700; white-space: nowrap; margin-top: -1px; }
.fold-dots { width: 6px; height: 20px; }
.fold-list { flex: 1; }
.fold { height: 39.800px; display: flex; align-items: center; border-bottom: 1px solid #f0f1f2; padding: 1px 0 0 10px; font-size: 15.400px; }
.fold-on { height: 38px; background: #e7f6fd; font-weight: 700; border-bottom: 0; padding-top: 0; }
.fold-g { width: 22px; height: 20px; color: #2c363a; fill: currentColor; }
.fold-n { margin-left: 8px; width: 240px; }
.badge { width: 30px; height: 22px; border-radius: 5px; background: #00b4ff; color: #fff; text-align: center; font-size: 14px; line-height: 21px; }
.quota { height: 38px; flex: none; border-top: 1px solid #d4dbde; display: flex; align-items: center; padding-left: 60px; }
.quota-g { width: 22px; height: 15px; }
.quota-bar { margin-left: 19px; width: 127px; height: 7px; border: 1px solid #d4dbde; border-radius: 4px; overflow: hidden; }
.quota-fill { width: 14px; height: 100%; background: #55c6f7; }
.quota-p { margin-left: 15px; font-size: 13px; font-weight: 700; color: #6e7275; }

.list { width: 555px; flex: none; display: flex; flex-direction: column; border-right: 1px solid #d4dbde; }
.list-head { justify-content: center; gap: 14px; padding-right: 1px; }
.tbtn { display: flex; flex-direction: column; align-items: center; font-size: 14px; line-height: 18px; color: #2c363a; position: relative; }
.tbtn-g { width: 22px; height: 22px; margin-bottom: 4px; color: #2c363a; fill: currentColor; }
.tbtn-off, .tbtn-off .tbtn-g { color: #9aa0a4; }
.search { height: 38px; flex: none; background: #fafafa; border-bottom: 1px solid #f2f2f2; display: flex; align-items: center; padding-left: 12px; }
.search-g { width: 19px; height: 19px; }
.search-t { margin-left: 9px; width: 457px; font-size: 15.400px; color: #6e7275; }
.search-e { width: 20px; height: 20px; fill: #2c363a; }
.search-c { width: 14px; height: 9px; margin-left: 14px; }
.list-body { flex: 1; display: flex; min-height: 0; overflow: hidden; }
.msgs { flex: 1; min-width: 0; overflow: hidden; }
.msg { height: 59.600px; border-bottom: 1px solid #f2f3f4; padding-left: 29.500px; padding-right: 40px; margin-left: 1px; }
.msg-sel { background: #e7f6fd; }
.m-top { display: flex; justify-content: space-between; height: 28px; line-height: 28px; font-size: 13.860px; color: #757a7e; }
.m-sub { height: 31.500px; line-height: 31.500px; font-size: 15.400px; color: #22292c; position: relative; white-space: nowrap; }
.m-sub::before { content: ""; position: absolute; left: -15.500px; top: 13px; width: 6px; height: 6px; border-radius: 50%; background: #2c363a; }
.m-new { font-weight: 700; }
.m-new::before { width: 8px; height: 8px; left: -16.500px; top: 12px; background: #ffce54; }
.emo { display: inline-block; width: 17px; height: 17px; vertical-align: -3px; }
.emo-w { width: 20px; height: 14px; vertical-align: -2px; }
.sb { width: 14px; flex: none; background: #f1f1f1; display: flex; flex-direction: column; align-items: center; }
.sb-up { width: 0; height: 0; border: 4px solid transparent; border-bottom: 5px solid #a4a4a4; border-top: 0; margin-top: 6px; }
.sb-thumb { width: 11px; background: #c1c1c1; margin-top: 6px; }
.sb-down { width: 0; height: 0; border: 4px solid transparent; border-top: 5px solid #505050; border-bottom: 0; margin-top: auto; margin-bottom: 4px; }
.sb-list .sb-thumb { height: 229px; }
.sb-read .sb-thumb { height: 619px; }
.pager { height: 38px; flex: none; border-top: 1px solid #d4dbde; display: flex; align-items: center; padding-left: 21px; color: #2c363a; }
.pg { stroke: #2c363a; stroke-width: 2.800; fill: none; height: 12px; }
.pg-off { stroke: #9aa0a4; }
.pg-dbl, .pg-dbl2 { width: 16px; }
.pg-one, .pg-one2 { width: 8px; }
.pg-one { margin-left: 40px; }
.pg-t { margin-left: 97px; width: 214px; font-size: 12.300px; font-weight: 700; color: #6e7275; white-space: nowrap; }
.pg-in { margin-left: 4px; width: 46px; height: 25px; border: 1px solid #d4dbde; border-radius: 4px; text-align: center; line-height: 23px; font-size: 15px; }
.pg-one2 { margin-left: 23px; }
.pg-dbl2 { margin-left: 41px; }

.read { flex: 1; min-width: 0; display: flex; flex-direction: column; }
.read-head { justify-content: flex-end; gap: 14px; padding-right: 216px; }
.tbtn-drop { margin-right: 12px; }
.tbtn-drop::after { content: ""; position: absolute; right: -13px; top: 22px; border: 4px solid transparent; border-top: 5px solid #2c363a; border-bottom: 0; }
.tbtn-wide { margin-right: 25px; }
.tbtn-mark { margin-right: 4px; }
.read-body { flex: 1; display: flex; min-height: 0; overflow: hidden; }
.mail { flex: 1; min-width: 0; overflow: hidden; padding: 0 15px 0 16px; }
.mail-title { margin: 0; height: 51px; padding-top: 7px; line-height: 32px; font-size: 23.300px; font-weight: 500; color: #2c363a; display: flex; align-items: center; gap: 9px; white-space: nowrap; }
.mail-ext { width: 15px; height: 14px; margin-top: 3px; }
.mail-hd { display: flex; height: 127px; }
.avatar { width: 62px; height: 62px; margin-left: -1px; }
.hd-txt { margin-left: 17px; }
.hd-row { display: flex; height: 25px; line-height: 25px; font-size: 15.400px; }
.hd-row b { width: 52px; font-weight: 500; color: #6a6f72; }
.hd-row a, .hd-links a, .body a { color: #00acec; }
.hd-links { display: flex; align-items: center; height: 28px; margin-top: 2px; font-size: 13.860px; }
.hl-g { width: 17px; height: 17px; margin-right: 6px; }
.hl-i { margin-left: 12px; }
.hl-l { margin-left: 13px; width: 15px; height: 15px; margin-right: 7px; }
.body { font-size: 15.400px; line-height: 23px; color: #2c363a; }
.gap { margin-top: 23px; }
.quote { border-collapse: collapse; margin: 23px 0 0 -1px; color: #1d2326; border: 2px solid #000; table-layout: fixed; width: 331px; }
.quote th, .quote td { border: 1px solid #000; padding: 4px 4px 4px 4px; text-align: left; vertical-align: top; font-size: 15.400px; line-height: 23px; }
.quote th { font-weight: 500; border-bottom: 2px solid #000; }
.q1 { width: 115px; } .q2 { width: 98px; } .q3 { width: 118px; }
.gap-note { margin-top: 24px; }
.notes { list-style: decimal; padding-left: 60px; }
.blk { color: #15191b; }
.gap-s { margin-top: 16px; }
.bq { margin: 1px 0 0 6px; padding: 0 0 0 8px; width: 841px; height: 160px; background: #f7f9f9; border-left: 1px solid #cfd6d9; border-right: 2px solid #00689b; color: #006a9e; }
.sb-read { background: #efefef; }

/* ---------- dock ---------- */
.dock { flex: 1; display: flex; flex-direction: column; min-width: 0; }
.dock-top { height: 425px; flex: none; background: #2d3e46; }
.dk { height: 64.300px; display: flex; align-items: center; justify-content: center; position: relative; }
.dk svg { width: 48px; height: 48px; }
.dk-dot::after { content: ""; position: absolute; right: 0; top: 28px; width: 6px; height: 6px; border-radius: 50%; background: #e95420; }
.dk-on { background: rgba(255,255,255,.16); border-radius: 4px; margin: 1px 2px 1px 3px; height: 62px; }
.dock-mid { height: 53px; flex: none; background: #4f4c46; display: flex; justify-content: center; align-items: flex-start; padding-top: 32px; }
.dk-troop { width: 48px; height: 48px; font-family: "Noto Sans", sans-serif; font-weight: 500; color: #fff; text-align: center; display: flex; flex-direction: column; font-size: 11px; position: relative; z-index: 1; flex: none; }
.dk-troop-a { background: #2b3a63; height: 24px; line-height: 24px; }
.dk-troop-b { background: #f26d85; height: 24px; line-height: 24px; }
.dock-faint { height: 137px; flex: none; background: #666560; border-bottom: 1px solid #56554f; display: flex; flex-direction: column; align-items: center; }
.dk-bg { width: 67px; height: 115px; }
.dk-k { color: #4a4a46; font-size: 16px; line-height: 21px; margin-top: 5px; }
.dock-low {
  flex: 1; display: flex; flex-direction: column; align-items: center;
  background-color: #666560;
  background-image: repeating-linear-gradient(#666560 0 16px, #56554f 16px 17px);
}
.dk-apps { margin-top: auto; margin-bottom: 16px; display: grid; grid-template-columns: repeat(3, 6px); gap: 4px 6px; }
.dk-apps i { width: 6px; height: 8px; border-radius: 50%; background: #f4f4f4; }
```
